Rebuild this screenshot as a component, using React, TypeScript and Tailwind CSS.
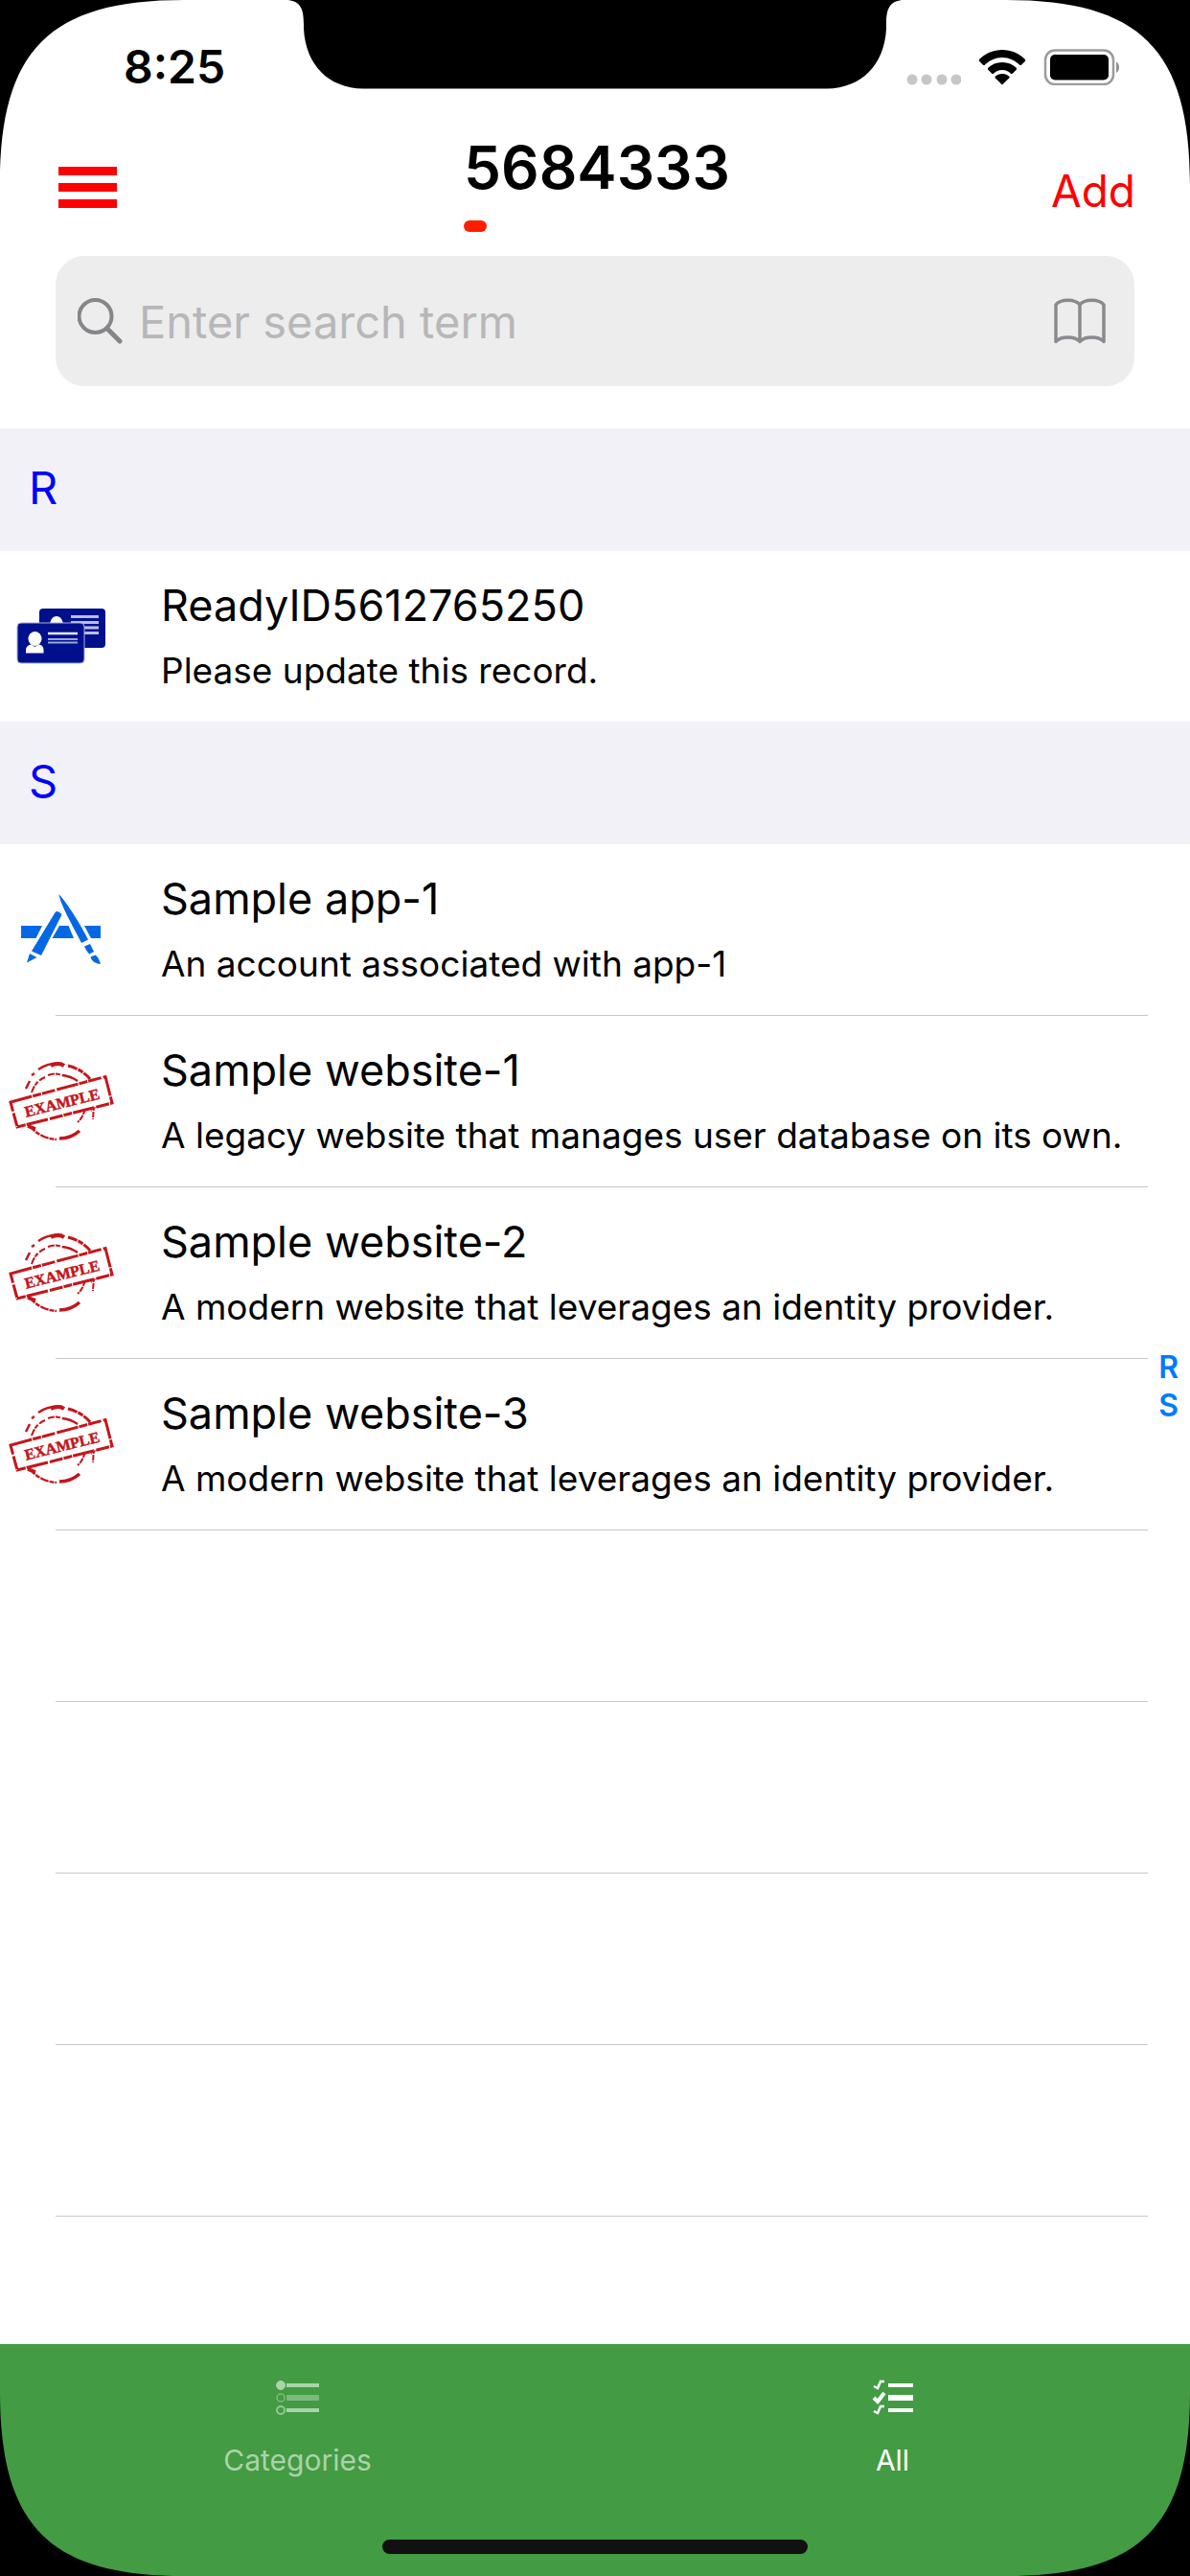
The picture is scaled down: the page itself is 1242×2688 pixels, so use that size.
import { useState } from 'react'

interface RecordItem {
  title: string
  note: string
  icon: 'id' | 'app' | 'stamp'
}

interface Section {
  letter: string
  items: RecordItem[]
}

const sections: Section[] = [
  {
    letter: 'R',
    items: [{ title: 'ReadyID5612765250', note: 'Please update this record.', icon: 'id' }],
  },
  {
    letter: 'S',
    items: [
      { title: 'Sample app-1', note: 'An account associated with app-1', icon: 'app' },
      { title: 'Sample website-1', note: 'A legacy website that manages user database on its own.', icon: 'stamp' },
      { title: 'Sample website-2', note: 'A modern website that leverages an identity provider.', icon: 'stamp' },
      { title: 'Sample website-3', note: 'A modern website that leverages an identity provider.', icon: 'stamp' },
    ],
  },
]

const emptyRows = [1, 2, 3, 4]

function IdCardsIcon() {
  return (
    <svg width="94" height="58" viewBox="0 0 94 58" aria-hidden="true">
      <rect x="24" y="0" width="69" height="41" rx="4" fill="#00108c" />
      <path d="M35 18c0-6 3-10 7-10s7 4 7 10z" fill="#fff" />
      <path d="M57 8.500h29M57 14.500h29M57 20h29M57 25.500h29" stroke="#b9bde6" strokeWidth="3" />
      <rect x="1" y="15" width="70" height="42" rx="4" fill="#00108c" stroke="#a9aedd" strokeWidth="1" />
      <ellipse cx="19.500" cy="31.500" rx="7" ry="7.500" fill="#fff" />
      <path d="M10 46.500v-3c0-4 3-5.500 5.500-6l4 2.500 4-2.500c3 .5 5 2 5 6v3z" fill="#fff" />
      <path d="M33 26h31" stroke="#e6e8fa" strokeWidth="2.500" />
      <path d="M33 32h31M33 35.500h31" stroke="#9ea4dc" strokeWidth="2" />
    </svg>
  )
}

function AppStoreIcon() {
  return (
    <svg width="84" height="74" viewBox="0 0 84 74" fill="#0468e5" aria-hidden="true">
      <path d="M0 33h22l-6.500 13H0zM40 33h9.500l5.500 13H32.500zM66 33h17v13H73z" />
      <path d="M35 20q1.500-3 4-1.500l2 1q2 1 1 3L21 64l-10-4.500zM9 62l7.500 4L6 71.500z" />
      <path d="M39.500 0C47 8 62 31 70 47.500L63 51C54 33 41 11 39.500 0zM66 54.500l6-2.500 4 8-4.500 2.500c-2-1-4-5-5.500-8zM72.500 65.500l5-2c3 2 4 5 5.500 9.500-4-.5-9-2-10.500-7.500z" />
    </svg>
  )
}

function StampIcon() {
  return (
    <svg width="128" height="90" viewBox="0 0 128 90" fill="none" stroke="#c4161c" aria-hidden="true">
      <path d="M27 32l4-8M33 18l3-2M40 12q12-8 25-6" strokeWidth="2.500" />
      <path d="M53 8q8-4 14 0" strokeWidth="4" />
      <path d="M71 8q15 4 23 14" strokeWidth="3" strokeDasharray="10 1 6 1" />
      <path d="M33 36q4-12 14-16M50 18q8-3 15 0" strokeWidth="2" strokeDasharray="7 1 5 2" />
      <path d="M65 18q9 1 16 6" strokeWidth="2.500" />
      <path d="M30 70q12 14 29 15" strokeWidth="2.500" strokeDasharray="9 1 5 1" />
      <path d="M62 84q12 0 21-8" strokeWidth="3.500" />
      <path d="M98 49l-1 15M101 50l-6 5M89 53q-3 10-8 14" strokeWidth="2" strokeDasharray="6 1" />
      <path d="M29 71l8 3" strokeWidth="4" />
      <path d="M11 46L110 19.500 117 47 18 72z" fill="#fff" strokeWidth="3" strokeDasharray="23 1 9 1 14 2" />
      <text
        x="0"
        y="0"
        transform="translate(66 52) rotate(-14)"
        textAnchor="middle"
        fill="#c4161c"
        stroke="#c4161c"
        strokeWidth=".5"
        fontFamily="'Liberation Serif', serif"
        fontWeight="700"
        fontSize="16"
      >
        EXAMPLE
      </text>
    </svg>
  )
}

function RowIcon({ icon }: { icon: RecordItem['icon'] }) {
  if (icon === 'id') return <IdCardsIcon />
  if (icon === 'app') return <AppStoreIcon />
  return <StampIcon />
}

// Black mask for one rounded corner of the screen
function Corner({ className }: { className: string }) {
  return (
    <svg className={`pointer-events-none absolute size-48 ${className}`} viewBox="0 0 192 192" aria-hidden="true">
      <path d="M0 0H192C52 0 0 52 0 192z" />
    </svg>
  )
}

function StatusBar() {
  return (
    <div className="flex h-35 items-center justify-between pr-[73px] pl-[129px]">
      <span className="text-[48px] leading-none font-semibold">8:25</span>
      <div className="flex items-center gap-[18px]">
        <svg width="57" height="38" viewBox="0 0 57 38" fill="#c6c6c8" aria-hidden="true">
          <circle cx="6" cy="32" r="5.500" />
          <circle cx="21" cy="32" r="5.500" />
          <circle cx="37" cy="32" r="5.500" />
          <circle cx="52" cy="32" r="5.500" />
        </svg>
        <svg width="50" height="38" viewBox="0 0 50 38" aria-hidden="true">
          <path d="M25 1C16 1 7.500 4.500 1 11l-.3 1.500 4.500 4.500 1.300 0C11.500 12 18 9 25 9s13.500 3 18.500 8h1.300l4.500-4.500L49 11C42.500 4.500 34 1 25 1z" />
          <path d="M25 14c-6 0-11 2.300-15 6v1.500l4.500 4.500h1.300c2.500-2.500 5.600-4 9.200-4s6.700 1.500 9.200 4h1.300L40 21.500V20c-4-3.700-9-6-15-6z" />
          <path d="M25 26c-3 0-5.500 1.200-7.500 3v1.300L25 37.500l7.500-7.200V29c-2-1.800-4.500-3-7.500-3z" />
        </svg>
        <svg width="80" height="38" viewBox="0 0 80 38" aria-hidden="true">
          <rect x="2" y="1.500" width="71" height="35.500" rx="10" fill="none" stroke="#9b9b9b" strokeWidth="2.500" />
          <rect x="7" y="6" width="61" height="26.500" rx="5" />
          <path d="M76 13.500c4 2 4 9.500 0 11.500z" fill="#8f8f8f" />
        </svg>
      </div>
    </div>
  )
}

function Notch() {
  return (
    <svg
      className="pointer-events-none absolute top-0 left-1/2 -translate-x-1/2"
      width="640"
      height="93"
      viewBox="0 0 640 93"
      aria-hidden="true"
    >
      <path d="M0 0C12 2 16 8 16 25V30C18 68 42 92 78 92.500H562C598 92 622 68 624 30V25C624 8 628 2 640 0z" />
    </svg>
  )
}

export default function App() {
  const [query, setQuery] = useState('')
  const [tab, setTab] = useState<'categories' | 'all'>('all')

  return (
    <div className="relative flex min-h-screen flex-col overflow-hidden bg-white font-[Inter,'Liberation_Sans',sans-serif] text-black">
      <StatusBar />

      <header className="grid h-[110px] grid-cols-[1fr_auto_1fr] items-center pr-[57px] pl-[61px]">
        <button type="button" aria-label="Menu" className="flex w-[61px] flex-col gap-2">
          <span className="h-[9px] bg-[#ff0000]" />
          <span className="h-[9px] bg-[#ff0000]" />
          <span className="h-[9px] bg-[#ff0000]" />
        </button>
        <div className="flex flex-col gap-5 self-start">
          <h1 className="text-[62px] leading-[70px] font-semibold">5684333</h1>
          <span className="h-3 w-6 rounded-md bg-[#ff1e00]" />
        </div>
        <button type="button" className="mt-2 justify-self-end text-[46px] leading-none text-[#ff0000]">
          Add
        </button>
      </header>

      <div className="mx-[58px] mt-[17px] flex h-34 items-center gap-4 rounded-[30px] bg-[#ededed] pr-[30px] pl-[23px]">
        <svg width="48" height="48" viewBox="0 0 48 48" fill="none" stroke="#85858a" strokeLinecap="round" aria-hidden="true">
          <circle cx="18.500" cy="19" r="17" strokeWidth="4" />
          <path d="M31 32l13 13" strokeWidth="5" />
        </svg>
        <input
          type="search"
          aria-label="Search"
          placeholder="Enter search term"
          value={query}
          onChange={(e) => setQuery(e.target.value)}
          className="min-w-0 flex-1 bg-transparent text-[47px] leading-none outline-none placeholder:text-[#b7b7b9]"
        />
        <button type="button" aria-label="Bookmarks">
          <svg width="54" height="48" viewBox="0 0 54 48" fill="none" stroke="#8a8a8e" strokeWidth="3.500" strokeLinejoin="round">
            <path d="M27 7C22 .5 7 .5 2 7v38.500c5-6 20-6 25 0zM27 7c5-6.500 20-6.500 25 0v38.500c-5-6-20-6-25 0z" />
          </svg>
        </button>
      </div>

      <main className="relative mt-11 flex-1">
        {sections.map((section) => (
          <section key={section.letter} id={`section-${section.letter}`}>
            <h2 className="flex h-32 items-center bg-[#f2f1f7] pb-1 pl-[30px] text-[47px] text-[#0000ff]">{section.letter}</h2>
            <ul>
              {section.items.map((item) => (
                <li key={item.title}>
                  <div className="flex h-[178px] items-center gap-10">
                    <div className="flex w-32 shrink-0 justify-center">
                      <RowIcon icon={item.icon} />
                    </div>
                    <div className="whitespace-nowrap">
                      <h3 className="text-[45px] leading-[72px]">{item.title}</h3>
                      <p className="text-[37px] leading-16">{item.note}</p>
                    </div>
                  </div>
                  {section.items.length > 1 && <div className="mr-11 ml-[58px] h-px bg-[#c8c8ca]" />}
                </li>
              ))}
            </ul>
          </section>
        ))}
        {emptyRows.map((row) => (
          <div key={row} className="mr-11 ml-[58px] h-[179px] border-b border-[#c8c8ca]" />
        ))}

        <nav aria-label="Index" className="absolute inset-y-0 right-3 flex flex-col items-center justify-center">
          {sections.map((section) => (
            <a
              key={section.letter}
              href={`#section-${section.letter}`}
              className="text-[32px] leading-10 font-semibold text-[#007aff]"
            >
              {section.letter}
            </a>
          ))}
        </nav>
      </main>

      <footer className="flex h-[242px] flex-col justify-between bg-[#439b43] pb-[23px]">
        <div className="grid grid-cols-2">
          <button
            type="button"
            aria-pressed={tab === 'categories'}
            onClick={() => setTab('categories')}
            className="flex flex-col items-center gap-7 pt-[37px] text-[#abd3ab]"
          >
            <svg width="48" height="38" viewBox="0 0 48 38" fill="none" stroke="currentColor" aria-hidden="true">
              <circle cx="6" cy="6" r="4.500" fill="currentColor" />
              <circle cx="6" cy="19" r="4" strokeWidth="1.500" opacity=".6" />
              <circle cx="6" cy="32" r="4" strokeWidth="2" opacity=".8" />
              <path d="M12 6h34M12 32h34" strokeWidth="4" />
              <path d="M12 19h34" strokeWidth="6" opacity=".55" />
            </svg>
            <span className="text-[30px] leading-9">Categories</span>
          </button>
          <button
            type="button"
            aria-pressed={tab === 'all'}
            onClick={() => setTab('all')}
            className="flex flex-col items-center gap-7 pt-[37px] text-white"
          >
            <svg width="44" height="38" viewBox="0 0 44 38" fill="none" stroke="currentColor" aria-hidden="true">
              <path d="M17 6h26M17 32h26" strokeWidth="4" />
              <path d="M17 19h26" strokeWidth="6" />
              <path d="M2 7l4 2 3-7h4M2 33l4 2 3-7h4" strokeWidth="2.500" />
              <path d="M2 19l4 4 7-9" strokeWidth="4" />
            </svg>
            <span className="text-[30px] leading-9">All</span>
          </button>
        </div>
        <div className="h-[15px] w-[444px] self-center rounded-full bg-[#111111]" />
      </footer>

      <Notch />
      <Corner className="top-0 left-0" />
      <Corner className="top-0 right-0 rotate-90" />
      <Corner className="right-0 bottom-0 rotate-180" />
      <Corner className="bottom-0 left-0 -rotate-90" />
    </div>
  )
}
